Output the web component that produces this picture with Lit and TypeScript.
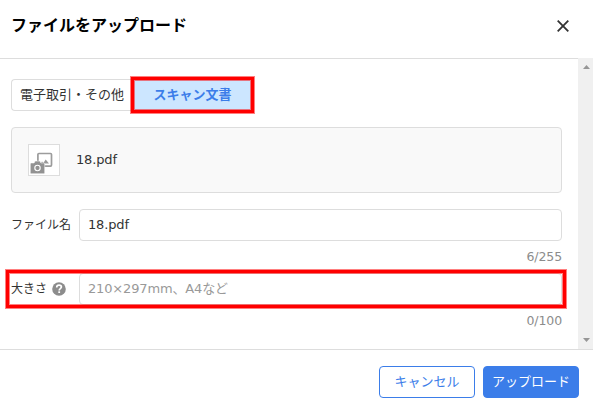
import { LitElement, html, css, svg } from "lit";
import { customElement } from "lit/decorators.js";

const closeIcon = html`<svg class="close" width="12" height="12" viewBox="0 0 12 12">
  <path d="M.7 .7 11.3 11.3M11.3 .7 .7 11.3" fill="none" stroke="#333" stroke-width="1.8" />
</svg>`;

const fileIcon = html`<svg width="30" height="30" viewBox="0 0 30 30">
  <rect x="8.900" y="8.500" width="13.600" height="12.600" rx="1" fill="none" stroke="#9c9c9c" stroke-width="1.700" />
  <path d="M11.500 18.500l1.500-2 1.500 1.200 2.200-3.200 3.300 4z" fill="#999" />
  <path d="M2.300 18h2.800l1-1.900h4.800l1 1.900h2.800q1 0 1 1v8.700q0 1-1 1H2.300q-1 0-1-1V19q0-1 1-1z" fill="#929292" stroke="#fff" stroke-width=".5" />
  <circle cx="8.500" cy="23" r="2.700" fill="none" stroke="#fff" stroke-width="1.100" />
</svg>`;

const helpIcon = html`<svg class="help" width="14" height="14" viewBox="0 0 14 14">
  <circle cx="7" cy="7" r="6.800" fill="#8c8c8c" />
  <path d="M4.700 5.400c0-1.500 1-2.200 2.400-2.200s2.300.8 2.300 1.900c0 1.500-2.200 1.600-2.200 3.300" fill="none" stroke="#fff" stroke-width="1.700" />
  <rect x="6.300" y="9.300" width="1.800" height="1.700" fill="#fff" />
</svg>`;

const arrow = (d: string) => html`<svg width="7" height="4" viewBox="0 0 7 4">${svg`<path d=${d} fill="#969696" />`}</svg>`;

@customElement("app-root")
export class AppRoot extends LitElement {
  static styles = css`
    :host {
      display: flex;
      flex-direction: column;
      width: 593px;
      height: 408px;
      overflow: hidden;
      background: #fff;
      color: #333;
      font: 13px/20px "DejaVu Sans", "Noto Sans CJK JP", sans-serif;
    }
    * { box-sizing: border-box; }
    svg { display: block; flex: none; }
    .head {
      display: flex;
      justify-content: space-between;
      height: 58px;
      padding: 14px 24px 0 11px;
    }
    .title {
      font: bold 16px/20px "Noto Sans CJK JP", sans-serif;
      color: #000;
    }
    .close { margin-top: 6px; }
    .body { display: flex; height: 291px; }
    .content {
      flex: 1;
      padding: 20px 16px 0 11px;
      border-top: 1px solid #ddd;
    }
    .tabs { display: flex; height: 32px; }
    .tab {
      position: relative;
      display: flex;
      align-items: center;
      justify-content: center;
      border: 1px solid #ddd;
    }
    .tab.first { width: 121px; border-right: 0; border-radius: 4px 0 0 4px; }
    .tab.active {
      width: 121px;
      background: #cce6ff;
      border-color: #cce6ff;
      color: #3b7de9;
      font-weight: bold;
    }
    .mark {
      position: absolute;
      border: 3px solid #f00;
      box-shadow: 0 0 0 1px rgba(255, 0, 0, .5), inset 0 0 0 1px rgba(255, 0, 0, .5);
      pointer-events: none;
    }
    .tab .mark { inset: -3px -2px -3px -2px; }
    .file {
      display: flex;
      align-items: center;
      height: 66px;
      margin-top: 16px;
      padding-left: 16px;
      border: 1px solid #ddd;
      border-radius: 4px;
      background: #f9f9f9;
      letter-spacing: -.15px;
    }
    .thumb {
      width: 32px;
      height: 32px;
      margin-right: 16px;
      border: 1px solid #ddd;
      background: #fff;
    }
    .row {
      position: relative;
      display: flex;
      align-items: center;
      height: 32px;
      margin-top: 16px;
    }
    .label {
      display: flex;
      align-items: center;
      width: 68px;
      font-size: 12px;
      white-space: nowrap;
    }
    .help { margin-left: 5px; }
    .field {
      display: flex;
      align-items: center;
      flex: 1;
      height: 32px;
      padding-left: 8px;
      border: 1px solid #ddd;
      border-radius: 4px;
      letter-spacing: -.15px;
    }
    .field.hint { color: #999; }
    .row .mark { inset: -3px -4px -3px -5px; }
    .count {
      height: 16px;
      line-height: 32px;
      text-align: right;
      color: #8c8c8c;
      font-size: 12.500px;
      letter-spacing: -.1px;
    }
    .bar {
      display: flex;
      flex-direction: column;
      align-items: center;
      justify-content: space-between;
      width: 15px;
      padding: 7px 0 7px 2px;
      background: #f0f0f0;
    }
    .foot {
      display: flex;
      justify-content: flex-end;
      gap: 8px;
      height: 59px;
      padding: 16px 14px 0 0;
      border-top: 1px solid #ddd;
    }
    .btn {
      display: flex;
      align-items: center;
      justify-content: center;
      width: 96px;
      height: 32px;
      border: 1px solid #3b7de9;
      border-radius: 4px;
      color: #3b7de9;
    }
    .btn.primary { background: #3b7de9; color: #fff; }
  `;

  render() {
    return html`
      <div class="head"><div class="title">ファイルをアップロード</div>${closeIcon}</div>
      <div class="body">
        <div class="content">
          <div class="tabs">
            <div class="tab first">電子取引・その他</div>
            <div class="tab active">スキャン文書<i class="mark"></i></div>
          </div>
          <div class="file"><div class="thumb">${fileIcon}</div>18.pdf</div>
          <div class="row"><div class="label">ファイル名</div><div class="field">18.pdf</div></div>
          <div class="count">6/255</div>
          <div class="row">
            <div class="label">大きさ${helpIcon}</div>
            <div class="field hint">210×297mm、A4など</div>
            <i class="mark"></i>
          </div>
          <div class="count">0/100</div>
        </div>
        <div class="bar">${arrow("M0 4 3.5 0 7 4z")}${arrow("M0 0 3.5 4 7 0z")}</div>
      </div>
      <div class="foot">
        <div class="btn">キャンセル</div>
        <div class="btn primary">アップロード</div>
      </div>
    `;
  }
}
